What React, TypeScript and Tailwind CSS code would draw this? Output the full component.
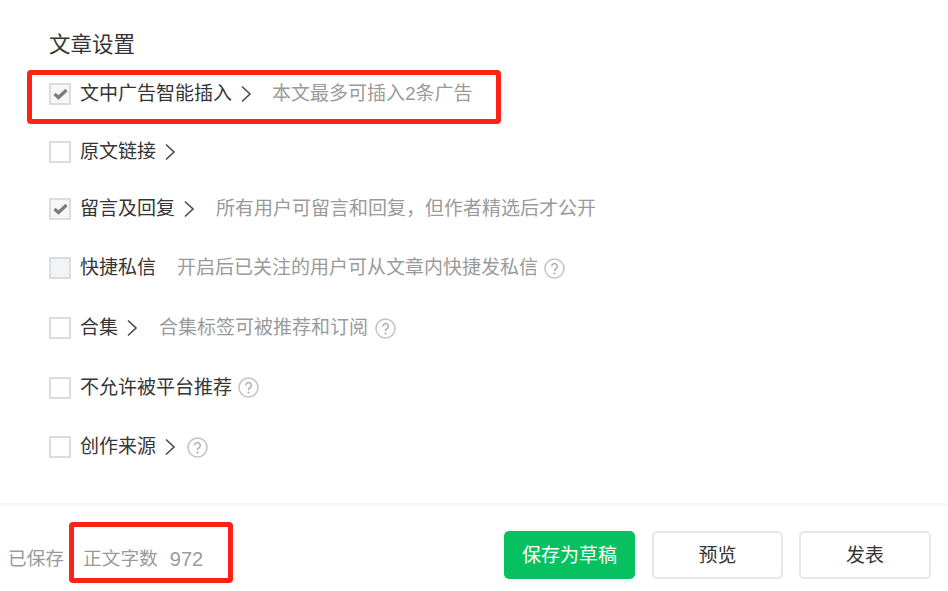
import { ReactNode } from "react";

const font = { fontFamily: '"Liberation Sans", "Noto Sans CJK SC", sans-serif' };

function Chevron() {
    return (
        <svg width="12" height="20" viewBox="0 0 12 20" fill="none" stroke="#4a4a4a" strokeWidth="1.6" className="ml-[8px] shrink-0">
            <polyline points="2,2.5 10,10 2,17.5" />
        </svg>
    );
}

function Help({ gap }: { gap: string }) {
    return (
        <svg width="21" height="21" viewBox="0 0 21 21" fill="none" className={`shrink-0 ${gap}`}>
            <circle cx="10.5" cy="10.5" r="9.5" stroke="#c4c4c4" strokeWidth="1.6" />
            <path d="M7.7 8.4a2.8 2.8 0 1 1 4.4 2.3c-1 .6-1.6 1.1-1.6 2.3" stroke="#a8a8a8" strokeWidth="1.4" />
            <circle cx="10.5" cy="15.6" r="1" fill="#a8a8a8" />
        </svg>
    );
}

function Box({ checked, disabled }: { checked?: boolean; disabled?: boolean }) {
    return (
        <span className={`flex h-[22px] w-[22px] shrink-0 items-center justify-center border-2 border-[#dcdcdc] ${disabled ? "bg-[#f2f3f7]" : checked ? "bg-[#f7f7f7]" : "bg-white"}`}>
            {checked && (
                <svg width="15" height="12" viewBox="0 0 15 12" fill="none" stroke="#7b7b7b" strokeWidth="3.2">
                    <polyline points="1.5,6 5.5,9.5 13.5,2" />
                </svg>
            )}
        </span>
    );
}

function Row({ label, hint, hintGap, arrow, helpGap, checked, disabled, height }: {
    label: string;
    hint?: string;
    hintGap?: string;
    arrow?: boolean;
    helpGap?: string;
    checked?: boolean;
    disabled?: boolean;
    height: string;
}) {
    return (
        <div className={`flex items-center ${height}`}>
            <Box checked={checked} disabled={disabled} />
            <span className="ml-[9px] pt-[1px] text-[19px] text-[#353535]">{label}</span>
            {arrow && <Chevron />}
            {hint && <span className={`pt-[1px] text-[19px] text-[#9a9a9a] ${hintGap}`}>{hint}</span>}
            {helpGap && <Help gap={helpGap} />}
        </div>
    );
}

function Btn({ children, primary, width }: { children: ReactNode; primary?: boolean; width: string }) {
    return (
        <button className={`h-[48px] rounded-[5px] pt-[2px] text-[19px] ${width} ${primary ? "bg-[#07c160] text-white" : "border-2 border-[#e7e7e7] bg-white text-[#353535]"}`}>
            {children}
        </button>
    );
}

export default function App() {
    return (
        <div className="relative flex h-[591px] w-[948px] flex-col overflow-hidden bg-white" style={font}>
            <div className="h-[503px] pl-[49px] pt-[29px]">
                <h2 className="h-[36px] text-[21.5px] leading-[32px] text-[#353535]">文章设置</h2>
                <Row height="h-[58px]" label="文中广告智能插入" arrow checked hint="本文最多可插入2条广告" hintGap="ml-[20px]" />
                <Row height="h-[57px]" label="原文链接" arrow />
                <Row height="h-[58px]" label="留言及回复" arrow checked hint="所有用户可留言和回复，但作者精选后才公开" hintGap="ml-[21px]" />
                <Row height="h-[60px]" label="快捷私信" disabled hint="开启后已关注的用户可从文章内快捷发私信" hintGap="ml-[21px]" helpGap="ml-[6px]" />
                <Row height="h-[60px]" label="合集" arrow hint="合集标签可被推荐和订阅" hintGap="ml-[21px]" helpGap="ml-[7px]" />
                <Row height="h-[59px]" label="不允许被平台推荐" helpGap="ml-[6px]" />
                <Row height="h-[60px]" label="创作来源" arrow helpGap="ml-[11px]" />
            </div>

            <div className="flex h-[88px] items-start border-t-[3px] border-[#f8f8f8] pl-[8px] pr-[17px] pt-[25px]">
                <div className="flex h-[56px] items-center pt-[1px] text-[18.7px] text-[#9a9a9a]">
                    <span>已保存</span>
                    <span className="ml-[19px]">正文字数</span>
                    <span className="-mt-[2px] ml-[12px] text-[20px]">972</span>
                </div>
                <div className="ml-auto flex">
                    <Btn primary width="w-[131px]">保存为草稿</Btn>
                    <div className="ml-[17px]"><Btn width="w-[131px]">预览</Btn></div>
                    <div className="ml-[16px]"><Btn width="w-[132px]">发表</Btn></div>
                </div>
            </div>

            {/* red annotation boxes */}
            <div className="absolute left-[27px] top-[70px] h-[54px] w-[474px] rounded-[4px] border-[5px] border-[#fb2216]" />
            <div className="absolute left-[69px] top-[522px] h-[61px] w-[164px] rounded-[4px] border-[5px] border-[#fb2216]" />
        </div>
    );
}
